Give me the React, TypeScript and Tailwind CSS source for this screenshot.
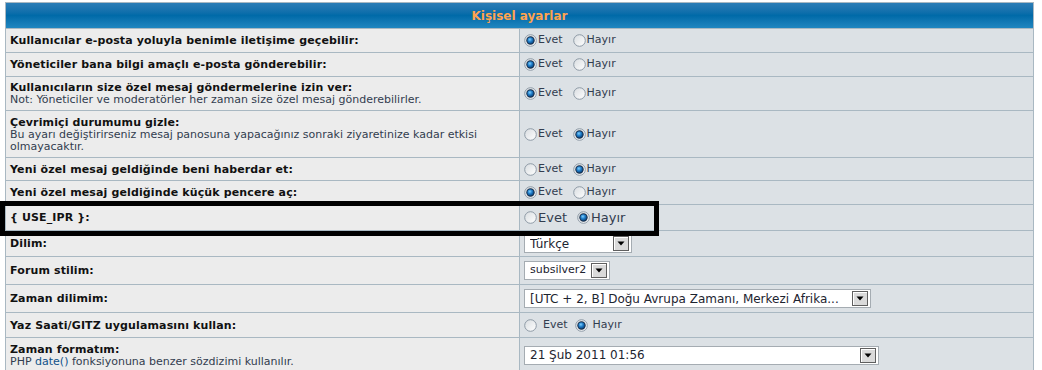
import React from 'react';

function Radio({ checked }: { checked?: boolean }) {
  return (
    <svg width="13" height="13" viewBox="0 0 13 13" className="shrink-0">
      <defs>
        <linearGradient id="rbg" x1="0" y1="0" x2="1" y2="1">
          <stop offset="0" stopColor="#D8DCE0" />
          <stop offset="1" stopColor="#FFFFFF" />
        </linearGradient>
        <radialGradient id="rdot" cx="0.4" cy="0.35" r="0.7">
          <stop offset="0" stopColor="#7FD0FF" />
          <stop offset="0.5" stopColor="#1E7CC8" />
          <stop offset="1" stopColor="#0B3E73" />
        </radialGradient>
      </defs>
      <circle cx="6.5" cy="6.5" r="5.8" fill="url(#rbg)" stroke="#8E9AA6" strokeWidth="1" />
      {checked && (
        <>
          <circle cx="6.5" cy="6.5" r="4.2" fill="#1A2F4A" />
          <circle cx="6.5" cy="6.5" r="3.2" fill="url(#rdot)" />
        </>
      )}
    </svg>
  );
}

function YesNo({ yes, big, spaced }: { yes: boolean; big?: boolean; spaced?: boolean }) {
  const txt = big ? 'text-[13px]' : 'text-[11px]';
  return (
    <div className={`flex items-center text-[#323D4F] ${txt}`}>
      <Radio checked={yes} />
      <span className={spaced ? 'ml-[6px]' : 'ml-[1px]'}>Evet</span>
      <span className={big ? 'ml-[10px]' : spaced ? 'ml-[7px]' : 'ml-[10px]'}>
        <Radio checked={!yes} />
      </span>
      <span className={spaced ? 'ml-[5px]' : 'ml-[1px]'}>Hayır</span>
    </div>
  );
}

function Select({ text, w, small }: { text: string; w: string; small?: boolean }) {
  return (
    <div
      className={`${w} h-[19px] bg-white border border-[#A5ACB2] flex items-center pl-[5px] pr-[2px] ${
        small ? 'text-[11px]' : 'text-[12px]'
      } text-[#1d2430]`}
    >
      <span className="flex-1 whitespace-nowrap overflow-hidden">{text}</span>
      <div className="shrink-0 w-[16px] h-[15px] border border-[#5F5F5F] bg-[#DADADA] shadow-[inset_1px_1px_0_#fff] flex items-center justify-center">
        <svg width="8" height="5" viewBox="0 0 8 5">
          <path d="M0.5 0.5 H7.5 L4 4.5 Z" fill="#000" />
        </svg>
      </div>
    </div>
  );
}

function Row({ h, left, right }: { h: string; left: React.ReactNode; right: React.ReactNode }) {
  return (
    <div className={`grid grid-cols-2 gap-px ${h}`}>
      <div className="bg-[#ECECEC] px-[4px] flex flex-col justify-center">{left}</div>
      <div className="bg-[#DCE1E5] pl-[4px] flex items-center">{right}</div>
    </div>
  );
}

const Label = ({ children }: { children: React.ReactNode }) => (
  <div className="text-[11px] leading-[13px] font-bold tracking-[0.13px] text-[#111]">{children}</div>
);
const Small = ({ children }: { children: React.ReactNode }) => (
  <div className="text-[11px] leading-[12px] text-[#323D4F]">{children}</div>
);

export default function App() {
  return (
    <div className="relative w-[1042px] h-[370px] overflow-hidden bg-white font-['DejaVu_Sans',Verdana,sans-serif]">
      <div className="ml-[5px] mt-[2px] w-[1029px] bg-[#A9B8C2] p-px flex flex-col gap-px">
        <div className="h-[25px] bg-gradient-to-b from-[#2A7DB6] via-[#006AA8] to-[#1F86C0] flex items-center justify-center">
          <span className="text-[12px] font-bold text-[#FFA34F]">Kişisel ayarlar</span>
        </div>
        <Row h="h-[23px]" left={<Label>Kullanıcılar e-posta yoluyla benimle iletişime geçebilir:</Label>} right={<YesNo yes />} />
        <Row h="h-[23px]" left={<Label>Yöneticiler bana bilgi amaçlı e-posta gönderebilir:</Label>} right={<YesNo yes />} />
        <Row
          h="h-[33px]"
          left={
            <>
              <Label>Kullanıcıların size özel mesaj göndermelerine izin ver:</Label>
              <Small>Not: Yöneticiler ve moderatörler her zaman size özel mesaj gönderebilirler.</Small>
            </>
          }
          right={<YesNo yes />}
        />
        <Row
          h="h-[46px]"
          left={
            <>
              <Label>Çevrimiçi durumumu gizle:</Label>
              <Small>
                Bu ayarı değiştirirseniz mesaj panosuna yapacağınız sonraki ziyaretinize kadar etkisi
                <br />
                olmayacaktır.
              </Small>
            </>
          }
          right={<YesNo yes={false} />}
        />
        <Row h="h-[22px]" left={<Label>Yeni özel mesaj geldiğinde beni haberdar et:</Label>} right={<YesNo yes={false} />} />
        <Row h="h-[23px]" left={<Label>Yeni özel mesaj geldiğinde küçük pencere aç:</Label>} right={<YesNo yes />} />
        <Row h="h-[25px]" left={<Label>{'{ USE_IPR }:'}</Label>} right={<YesNo yes={false} big />} />
        <Row h="h-[25px]" left={<Label>Dilim:</Label>} right={<Select text="Türkçe" w="w-[108px]" />} />
        <Row h="h-[27px]" left={<Label>Forum stilim:</Label>} right={<Select text="subsilver2" w="w-[86px]" small />} />
        <Row
          h="h-[27px]"
          left={<Label>Zaman dilimim:</Label>}
          right={<Select text="[UTC + 2, B] Doğu Avrupa Zamanı, Merkezi Afrika..." w="w-[347px]" />}
        />
        <Row h="h-[24px]" left={<Label>Yaz Saati/GITZ uygulamasını kullan:</Label>} right={<YesNo yes={false} spaced />} />
        <Row
          h="h-[34px]"
          left={
            <>
              <Label>Zaman formatım:</Label>
              <Small>
                PHP <span className="text-[#105289]">date()</span> fonksiyonuna benzer sözdizimi kullanılır.
              </Small>
            </>
          }
          right={<Select text="21 Şub 2011 01:56" w="w-[355px]" />}
        />
      </div>
      <div className="absolute left-0 top-[201px] w-[659px] h-[35px] border-[5px] border-black pointer-events-none" />
    </div>
  );
}
